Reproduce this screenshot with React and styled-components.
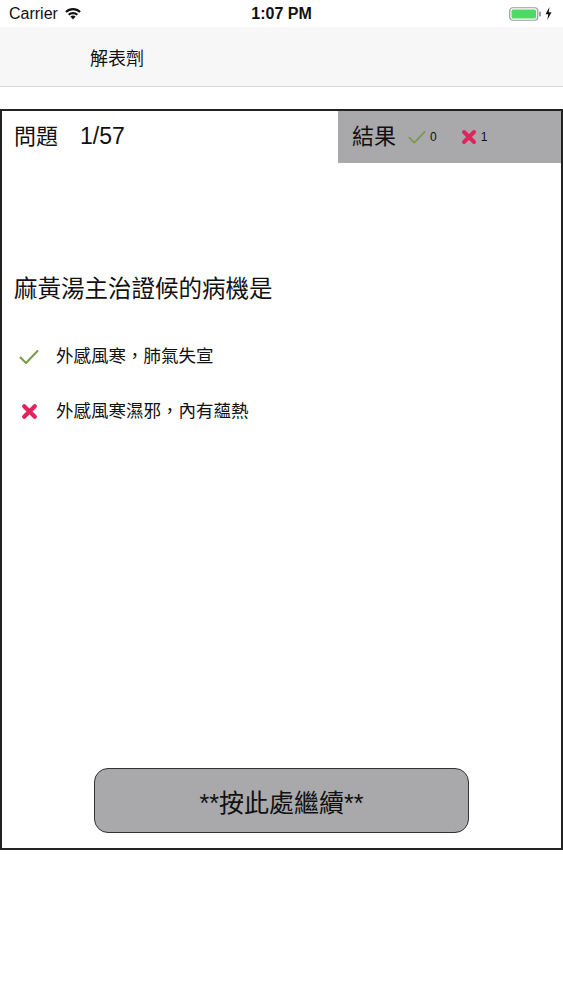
import React from 'react';
import styled, { createGlobalStyle } from 'styled-components';

const GlobalStyle = createGlobalStyle`
  body {
    margin: 0;
    background: #ffffff;
    font-family: "Liberation Sans", "Noto Sans CJK TC", sans-serif;
    color: #111;
  }
`;

const Screen = styled.div`
  width: 563px;
  height: 1000px;
  display: flex;
  flex-direction: column;
  background: #fff;
`;

const StatusBar = styled.div`
  height: 27px;
  padding: 0 9px;
  display: flex;
  align-items: center;
  justify-content: space-between;
  position: relative;
  font-size: 16px;
  color: #111;
`;

const Carrier = styled.div`
  display: flex;
  align-items: center;
  gap: 6px;
`;

const Clock = styled.div`
  position: absolute;
  left: 0;
  right: 0;
  text-align: center;
  font-weight: 600;
  pointer-events: none;
`;

const Battery = styled.div`
  display: flex;
  align-items: center;
  gap: 3px;
  padding-right: 2px;
`;

const NavBar = styled.div`
  height: 59px;
  background: #f7f7f8;
  border-bottom: 1px solid #d9d9d9;
  display: flex;
  align-items: center;
  padding-left: 90px;
  font-size: 18px;
  font-weight: 400;
`;

const QuizBox = styled.div`
  margin-top: 22px;
  height: 741px;
  border: 2px solid #222;
  box-sizing: border-box;
  display: flex;
  flex-direction: column;
`;

const HeaderRow = styled.div`
  height: 52px;
  display: flex;
  align-items: stretch;
  justify-content: space-between;
`;

const Counter = styled.div`
  padding-left: 12px;
  font-size: 22px;
  line-height: 50px;
`;

const Progress = styled.span`
  margin-left: 22px;
  font-size: 23px;
`;

const ResultPanel = styled.div`
  width: 223px;
  background: #a9a8ab;
  display: flex;
  align-items: center;
  padding-left: 14px;
  box-sizing: border-box;
  font-size: 22px;
  line-height: 1;
`;

const Score = styled.span`
  display: flex;
  align-items: center;
  gap: 4px;
  margin-left: ${(p) => p.$gap}px;
  font-size: 12px;
`;

const Question = styled.div`
  margin: 110px 0 0 12px;
  font-size: 23.5px;
  line-height: 32px;
`;

const AnswerList = styled.div`
  margin-top: 40px;
  display: flex;
  flex-direction: column;
  gap: 32px;
`;

const Answer = styled.div`
  display: flex;
  align-items: center;
  gap: 16px;
  padding-left: 16px;
  font-size: 17.5px;
  line-height: 23px;
`;

const IconSlot = styled.span`
  width: 22px;
  display: flex;
  justify-content: center;
`;

const Footer = styled.div`
  margin-top: auto;
  padding-bottom: 15px;
  display: flex;
  justify-content: center;
`;

const ContinueButton = styled.button`
  width: 375px;
  height: 65px;
  background: #a9a8ab;
  border: 1.5px solid #333;
  border-radius: 14px;
  font-family: "Liberation Sans", "Noto Sans CJK TC", sans-serif;
  font-size: 25px;
  color: #111;
  cursor: pointer;
`;

const Check = ({ size = 20 }) => (
  <svg width={size} height={size * 0.8} viewBox="0 0 20 16">
    <path d="M1.5 8.5 L7 14 L18.5 2" fill="none" stroke="#7a9a4c" strokeWidth="2" strokeLinecap="round" strokeLinejoin="round" />
  </svg>
);

const Cross = ({ size = 17 }) => (
  <svg width={size} height={size} viewBox="0 0 16 16">
    <path d="M3 3 L13 13 M13 3 L3 13" stroke="#e0245e" strokeWidth="4" strokeLinecap="round" />
  </svg>
);

const Wifi = () => (
  <svg width="18" height="13" viewBox="0 0 18 13">
    <path d="M9 12.5 L11.6 9.6 A3.8 3.8 0 0 0 6.4 9.6 Z" fill="#111" />
    <path d="M3.9 7 A7.4 7.4 0 0 1 14.1 7 L12.6 8.6 A5.3 5.3 0 0 0 5.4 8.6 Z" fill="#111" />
    <path d="M1.2 4.2 A11.2 11.2 0 0 1 16.8 4.2 L15.3 5.8 A9 9 0 0 0 2.7 5.8 Z" fill="#111" />
  </svg>
);

const BatteryIcon = () => (
  <svg width="33" height="14" viewBox="0 0 33 14">
    <rect x="0.75" y="0.75" width="28" height="12.5" rx="3" fill="none" stroke="#9a9a9a" strokeWidth="1.2" />
    <rect x="2.5" y="2.5" width="24.5" height="9" rx="1.5" fill="#4cd964" />
    <rect x="30" y="4.5" width="2" height="5" rx="1" fill="#9a9a9a" />
  </svg>
);

const Bolt = () => (
  <svg width="7" height="13" viewBox="0 0 7 13">
    <path d="M4.5 0 L0.5 7.2 L3.3 7.2 L2.3 13 L6.5 5.3 L3.7 5.3 Z" fill="#111" />
  </svg>
);

const answers = [
  { text: '外感風寒，肺氣失宣', correct: true },
  { text: '外感風寒濕邪，內有蘊熱', correct: false },
];

export default function App() {
  return (
    <>
      <GlobalStyle />
      <Screen>
        <StatusBar>
          <Carrier>
            Carrier <Wifi />
          </Carrier>
          <Clock>1:07 PM</Clock>
          <Battery>
            <BatteryIcon />
            <Bolt />
          </Battery>
        </StatusBar>
        <NavBar>解表劑</NavBar>

        <QuizBox>
          <HeaderRow>
            <Counter>
              問題
              <Progress>1/57</Progress>
            </Counter>
            <ResultPanel>
              結果
              <Score $gap={12}>
                <Check size={18} />0
              </Score>
              <Score $gap={24}>
                <Cross size={16} />1
              </Score>
            </ResultPanel>
          </HeaderRow>

          <Question>麻黃湯主治證候的病機是</Question>

          <AnswerList>
            {answers.map((a) => (
              <Answer key={a.text}>
                <IconSlot>{a.correct ? <Check /> : <Cross />}</IconSlot>
                {a.text}
              </Answer>
            ))}
          </AnswerList>

          <Footer>
            <ContinueButton>**按此處繼續**</ContinueButton>
          </Footer>
        </QuizBox>
      </Screen>
    </>
  );
}
